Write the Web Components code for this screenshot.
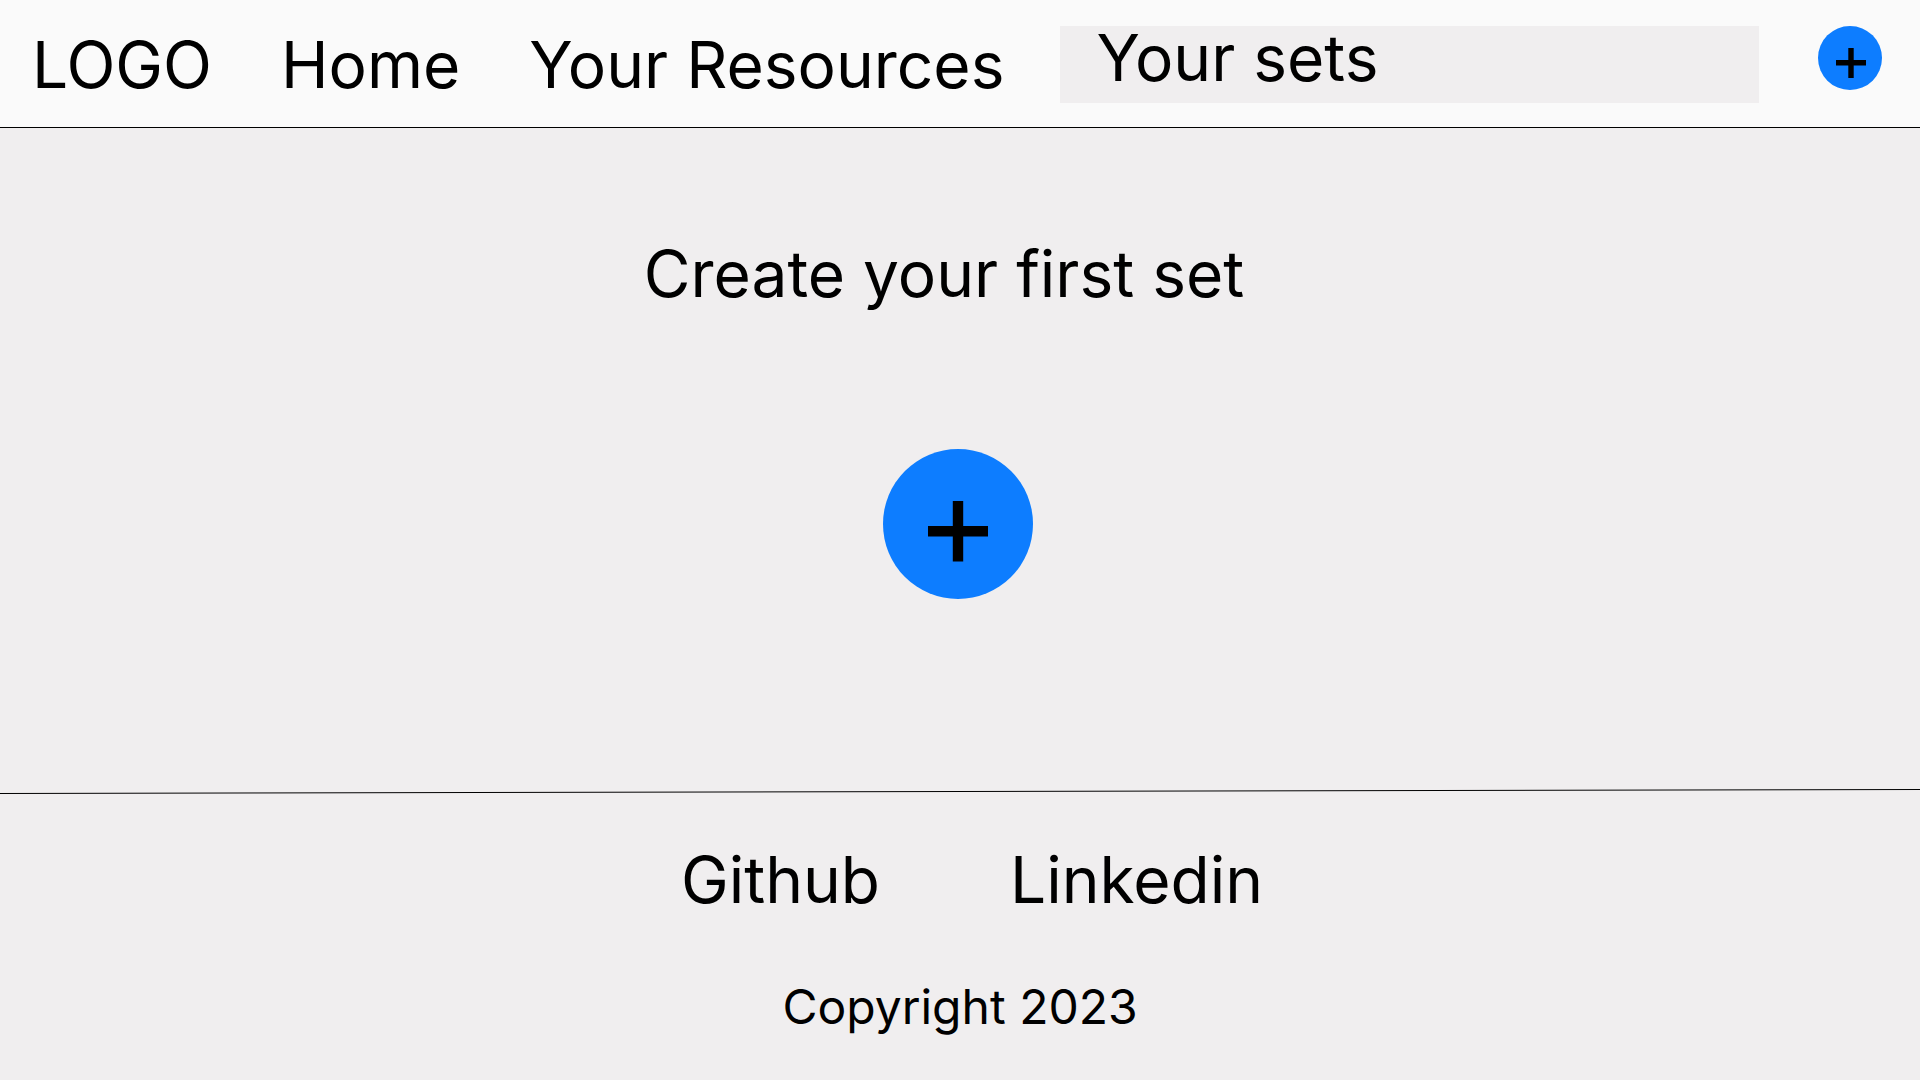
<!DOCTYPE html>
<html lang="en">
<head>
<meta charset="utf-8">
<meta name="viewport" content="width=device-width, initial-scale=1">
<title>Your sets</title>
<style>
  :root { --page: #f0eeef; --bar: #fafafa; --accent: #0d7dff; --ink: #000; }
  body { margin: 0; background: var(--page); color: var(--ink); font: 400 64px/77px Inter, sans-serif; }
</style>
</head>
<body>
<sets-page>
  <site-header slot="header">
    <nav-link href="#logo">LOGO</nav-link>
    <nav-link href="#home">Home</nav-link>
    <nav-link href="#resources">Your Resources</nav-link>
    <nav-link href="#sets" current>Your sets</nav-link>
    <add-button slot="action" label="Add set"></add-button>
  </site-header>
  <empty-state>
    <span slot="title">Create your first set</span>
    <add-button large label="Create set"></add-button>
  </empty-state>
  <site-footer slot="footer">
    <nav-link href="#github">Github</nav-link>
    <nav-link href="#linkedin">Linkedin</nav-link>
    <span slot="legal">Copyright 2023</span>
  </site-footer>
</sets-page>

<template id="sets-page">
  <style>
    :host { display: flex; flex-direction: column; min-height: 100vh; }
    main { flex: 1; }
  </style>
  <slot name="header"></slot>
  <main><slot></slot></main>
  <slot name="footer"></slot>
</template>

<template id="site-header">
  <style>
    :host { display: block; background: var(--bar); border-bottom: 1px solid var(--ink); }
    header { display: flex; align-items: flex-start; gap: 59px; padding: 26px 38px 24px 32px; }
    nav { flex: 1; display: flex; gap: 69px; }
  </style>
  <header>
    <nav aria-label="Main"><slot></slot></nav>
    <slot name="action"></slot>
  </header>
</template>

<template id="nav-link">
  <style>
    :host { display: block; white-space: nowrap; }
    :host([current]) { flex: 1; margin-left: -13px; }
    a { display: block; color: inherit; text-decoration: none; }
    :host([current]) a { box-sizing: border-box; background: var(--page); line-height: 63px; padding: 0 36px 14px; }
  </style>
  <a><slot></slot></a>
</template>

<template id="add-button">
  <style>
    :host { display: block; --size: 64px; }
    :host([large]) { --size: 150px; }
    button { display: block; width: var(--size); height: var(--size); padding: 0; border: 0; border-radius: 50%; background: var(--accent); color: var(--ink); cursor: pointer; }
    svg { display: block; width: 100%; height: 100%; }
  </style>
  <button type="button"><svg fill="none" stroke="currentColor" aria-hidden="true"><path/></svg></button>
</template>

<template id="empty-state">
  <style>
    :host { display: flex; flex-direction: column; align-items: center; gap: 137px; padding: 107px 4px 107px 0; }
    h1 { margin: 0; padding-right: 28px; font: inherit; }
  </style>
  <h1><slot name="title"></slot></h1>
  <slot></slot>
</template>

<template id="site-footer">
  <style>
    :host { display: block; }
    svg { display: block; width: 100%; height: 5px; }
    footer { display: flex; flex-direction: column; align-items: center; gap: 60px; padding: 47px 0 44px; }
    nav { display: flex; gap: 130px; padding-left: 24px; }
    small { font-size: 48px; line-height: 58px; }
  </style>
  <svg aria-hidden="true"><line x1="0" y1="4.5" x2="100%" y2="0.5" stroke="currentColor"/></svg>
  <footer>
    <nav aria-label="Social"><slot></slot></nav>
    <small><slot name="legal"></slot></small>
  </footer>
</template>

<script>
  class TemplateElement extends HTMLElement {
    constructor() {
      super();
      this.attachShadow({ mode: 'open' })
        .append(document.getElementById(this.localName).content.cloneNode(true));
    }
  }
  class SetsPage extends TemplateElement {}
  class SiteHeader extends TemplateElement {}
  class EmptyState extends TemplateElement {}
  class SiteFooter extends TemplateElement {}
  class NavLink extends TemplateElement {
    connectedCallback() {
      const a = this.shadowRoot.querySelector('a');
      a.href = this.getAttribute('href');
      if (this.hasAttribute('current')) a.setAttribute('aria-current', 'page');
    }
  }
  class AddButton extends TemplateElement {
    connectedCallback() {
      const large = this.hasAttribute('large');
      this.shadowRoot.querySelector('button').setAttribute('aria-label', this.getAttribute('label'));
      const svg = this.shadowRoot.querySelector('svg');
      svg.setAttribute('viewBox', large ? '0 0 150 150' : '0 0 64 64');
      svg.setAttribute('stroke-width', large ? '10.4' : '5.4');
      svg.querySelector('path').setAttribute('d', large ? 'M45 82.2H105M75 52V112.4' : 'M18 36.7H48M33 22V52');
    }
  }
  customElements.define('sets-page', SetsPage);
  customElements.define('site-header', SiteHeader);
  customElements.define('nav-link', NavLink);
  customElements.define('add-button', AddButton);
  customElements.define('empty-state', EmptyState);
  customElements.define('site-footer', SiteFooter);
</script>
</body>
</html>
